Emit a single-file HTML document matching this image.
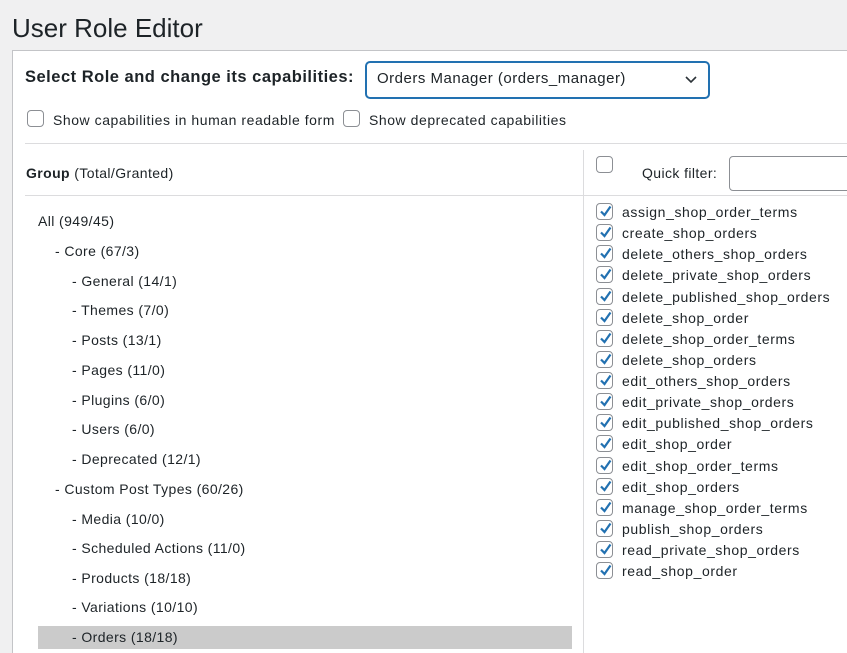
<!DOCTYPE html>
<html><head><meta charset="utf-8"><style>
*{margin:0;padding:0;box-sizing:border-box}
html,body{width:847px;height:653px;overflow:hidden}
body{background:#f0f0f1;font-family:"Liberation Sans","DejaVu Sans",sans-serif;color:#1d2327;position:relative;font-size:14px;letter-spacing:0.4px}
.a{position:absolute;white-space:nowrap;line-height:20px}
.cb{position:absolute;width:17px;height:17px;border:1px solid #8c8f94;border-radius:4px;background:#fff}
.ck{position:absolute;width:17px;height:17px;border:1px solid #8c8f94;border-radius:4px;background:#fff}
.ck svg{position:absolute;left:1px;top:0}
</style></head><body>
<div class="a" style="left:12px;top:13px;font-size:26px;line-height:30px;letter-spacing:0">User Role Editor</div>
<div style="position:absolute;left:12px;top:50px;width:835px;height:603px;background:#fff;border:1px solid #c3c4c7;border-bottom:none;border-right:none"></div>
<div class="a" style="left:25px;top:67px;font-size:16.5px;font-weight:bold;letter-spacing:0.5px">Select Role and change its capabilities:</div>
<div style="position:absolute;left:366px;top:62px;width:343px;height:36px;border:1px solid #2271b1;box-shadow:0 0 0 1px #2271b1;border-radius:4px;background:#fff"></div>
<div class="a" style="left:377px;top:69px;font-size:15px;letter-spacing:0.5px">Orders Manager (orders_manager)</div>
<svg style="position:absolute;left:685px;top:75px" width="12" height="10"><path d="M1 2 L6 7 L11 2" stroke="#2c3338" stroke-width="1.6" fill="none"/></svg>
<div class="cb" style="left:27px;top:110px"></div>
<div class="a" style="left:53px;top:110px;letter-spacing:0.55px">Show capabilities in human readable form</div>
<div class="cb" style="left:343px;top:110px"></div>
<div class="a" style="left:369px;top:110px;letter-spacing:0.55px">Show deprecated capabilities</div>
<div style="position:absolute;left:25px;top:143px;width:822px;height:1px;background:#dcdcde"></div>
<div style="position:absolute;left:583px;top:150px;width:1px;height:503px;background:#dcdcde"></div>
<div style="position:absolute;left:25px;top:195px;width:822px;height:1px;background:#dcdcde"></div>
<div class="a" style="left:26px;top:163px"><b>Group</b> (Total/Granted)</div>
<div class="cb" style="left:596px;top:156px"></div>
<div class="a" style="left:642px;top:163px">Quick filter:</div>
<div style="position:absolute;left:729px;top:156px;width:130px;height:35px;border:1px solid #8c8f94;border-radius:4px;background:#fff"></div>
<div style="position:absolute;left:38px;top:626px;width:534px;height:23px;background:#cbcbcb"></div>
<div class="a" style="left:38px;top:211px">All (949/45)</div>
<div class="a" style="left:55px;top:241px">- Core (67/3)</div>
<div class="a" style="left:72px;top:271px">- General (14/1)</div>
<div class="a" style="left:72px;top:300px">- Themes (7/0)</div>
<div class="a" style="left:72px;top:330px">- Posts (13/1)</div>
<div class="a" style="left:72px;top:360px">- Pages (11/0)</div>
<div class="a" style="left:72px;top:390px">- Plugins (6/0)</div>
<div class="a" style="left:72px;top:419px">- Users (6/0)</div>
<div class="a" style="left:72px;top:449px">- Deprecated (12/1)</div>
<div class="a" style="left:55px;top:479px">- Custom Post Types (60/26)</div>
<div class="a" style="left:72px;top:509px">- Media (10/0)</div>
<div class="a" style="left:72px;top:538px">- Scheduled Actions (11/0)</div>
<div class="a" style="left:72px;top:568px">- Products (18/18)</div>
<div class="a" style="left:72px;top:597px">- Variations (10/10)</div>
<div class="a" style="left:72px;top:627px">- Orders (18/18)</div>
<div id="caps"></div>
<script>
var c=["assign_shop_order_terms","create_shop_orders","delete_others_shop_orders","delete_private_shop_orders","delete_published_shop_orders","delete_shop_order","delete_shop_order_terms","delete_shop_orders","edit_others_shop_orders","edit_private_shop_orders","edit_published_shop_orders","edit_shop_order","edit_shop_order_terms","edit_shop_orders","manage_shop_order_terms","publish_shop_orders","read_private_shop_orders","read_shop_order"];
var h="";c.forEach(function(s,i){var y=Math.round(212+21.13*i);
h+='<div class="ck" style="left:596px;top:'+(y-9)+'px"><svg width="15" height="15"><path d="M3 7.5 L6.5 11 L12.5 2.5" stroke="#2271b1" stroke-width="2.2" fill="none"/></svg></div><div class="a" style="left:622px;top:'+(y-10)+'px;letter-spacing:0.6px">'+s+'</div>';});
document.getElementById("caps").innerHTML=h;
</script>
</body></html>
